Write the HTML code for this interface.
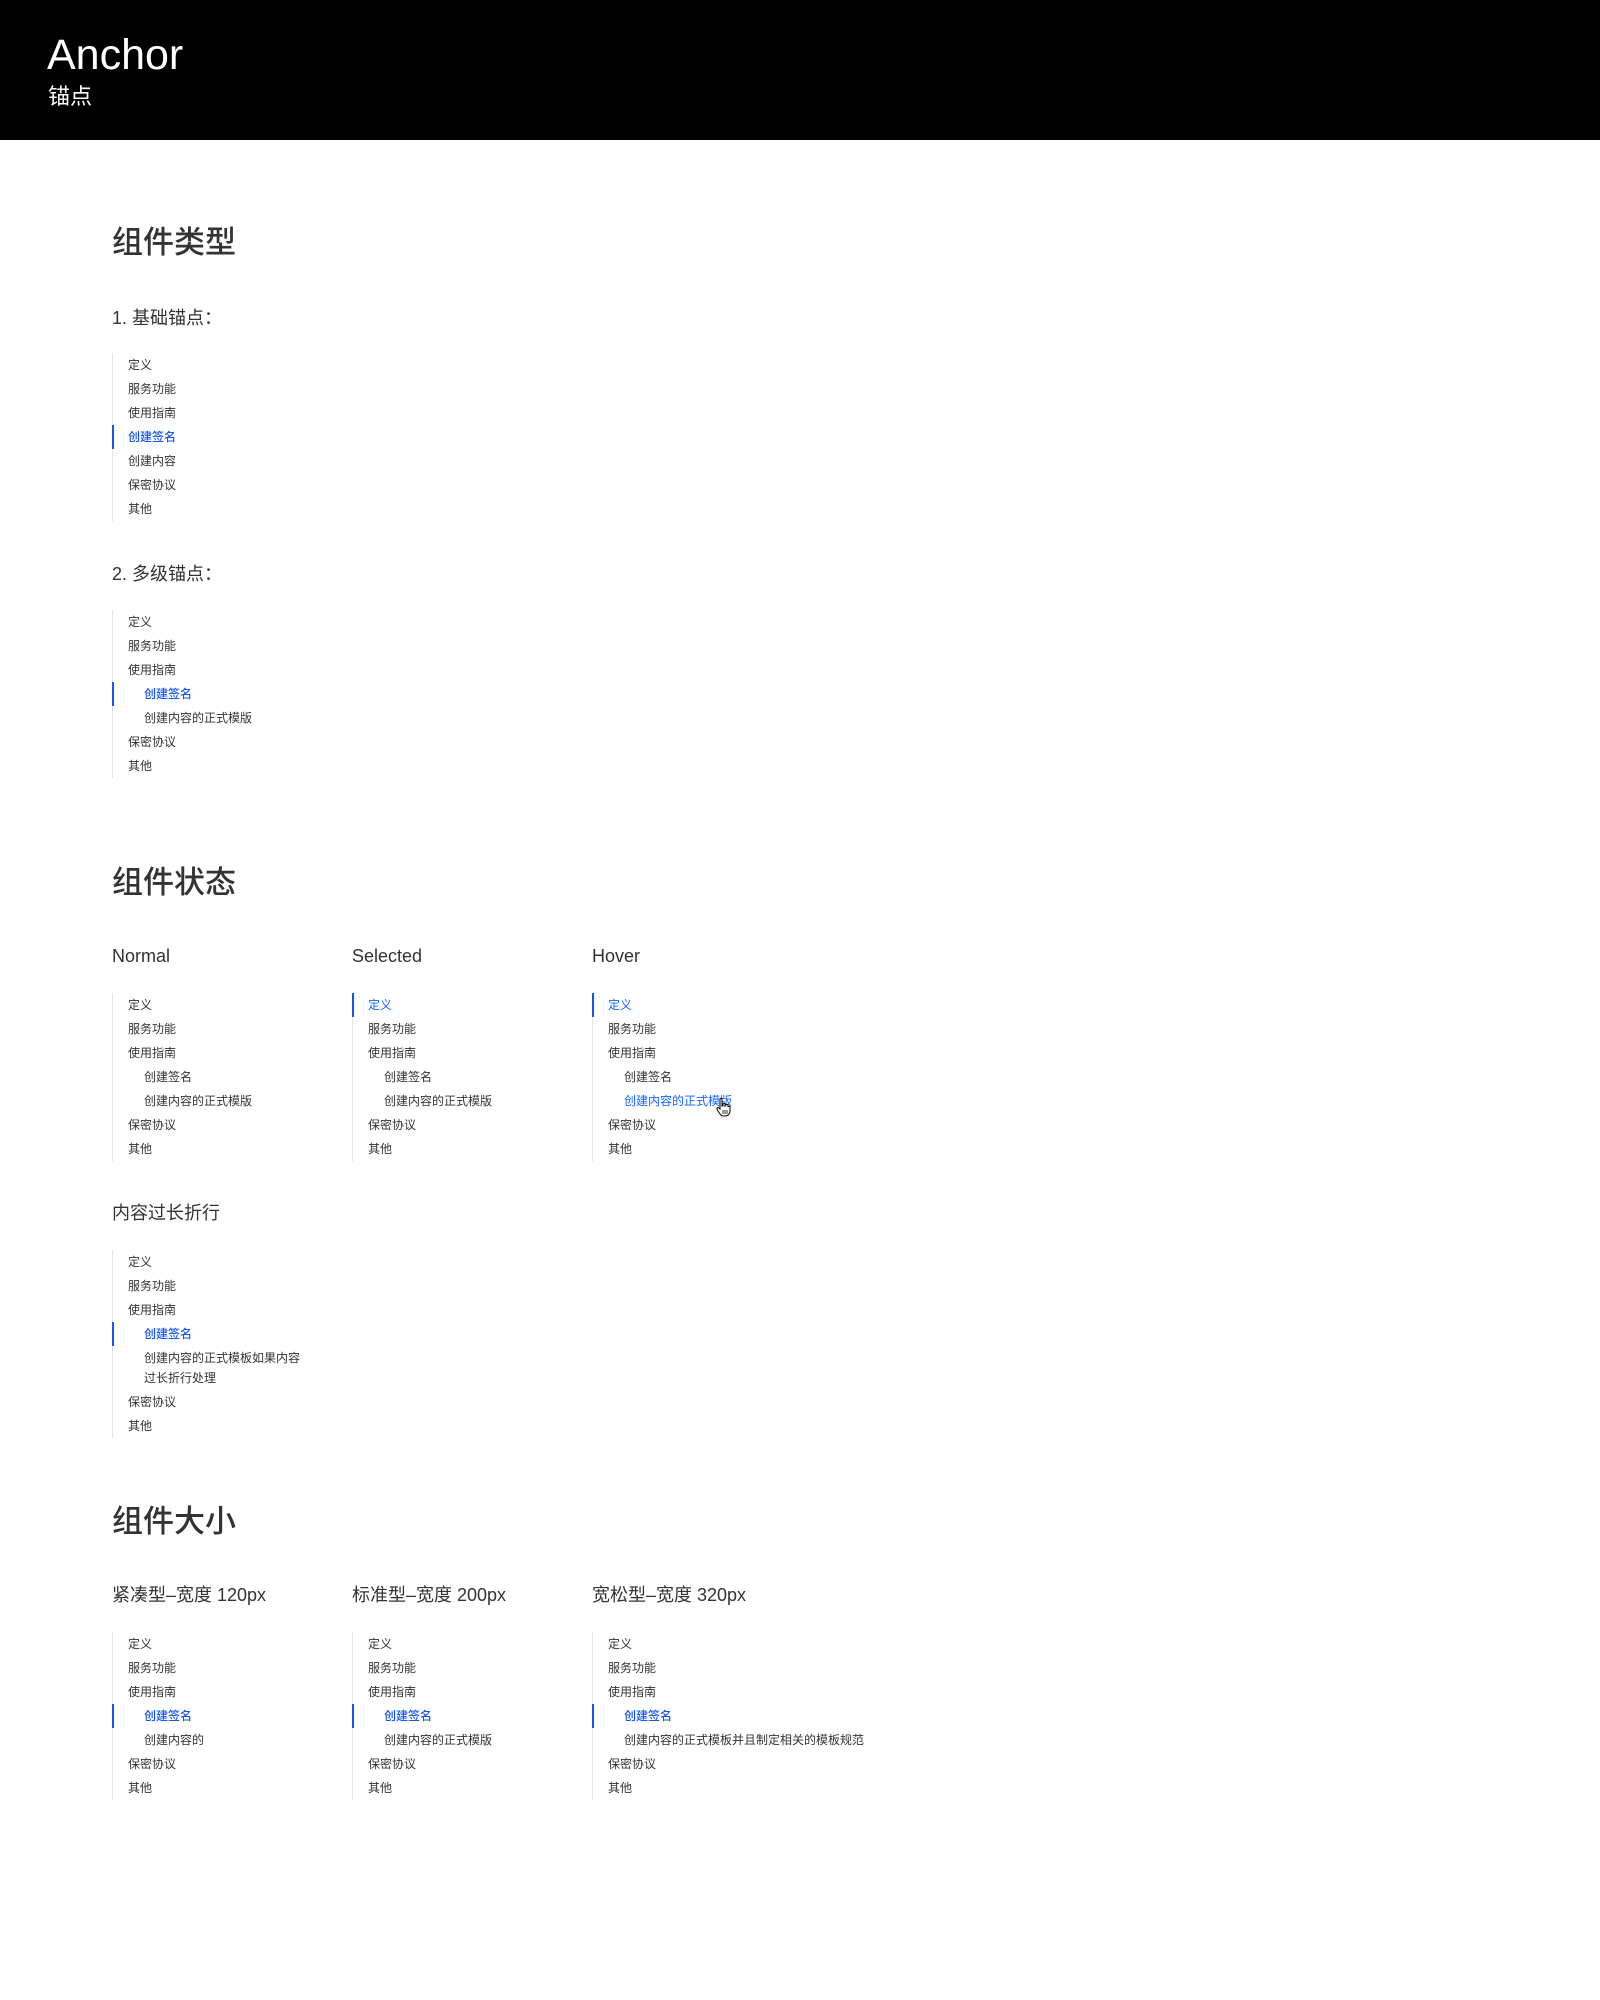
<!DOCTYPE html>
<html><head><meta charset="utf-8">
<style>
*{margin:0;padding:0;box-sizing:border-box}
body{width:1600px;height:2000px;background:#fff;position:relative;font-family:"Liberation Sans","Noto Sans CJK SC",sans-serif;color:#333;overflow:hidden}
.hdr{position:absolute;left:0;top:0;width:1600px;height:140px;background:#000}
.t1{position:absolute;left:47px;top:30px;font-size:43px;color:#fff;line-height:50px}
.t2{position:absolute;left:48px;top:83px;font-size:22px;color:#fff;line-height:28px}
.h2{position:absolute;left:112px;font-size:31px;line-height:40px;color:#333;font-weight:500}
.h3{position:absolute;font-size:18px;line-height:24px;color:#333}
.list{position:absolute;border-left:1px solid #e3e3e3;font-size:12px;color:#333}
.list div{position:relative;padding:2px 14px 2px 15px;line-height:20px;white-space:nowrap}
.list div.s{padding-left:31px}
.list div.a{color:#1456f0;font-weight:500}
.list div.b:before{content:"";position:absolute;left:-1px;top:0;bottom:0;width:2px;background:#1456f0}
.list div.h{color:#1664ff}
</style></head><body>
<div class="hdr"><div class="t1">Anchor</div><div class="t2">锚点</div></div>

<div class="h2" style="top:223px">组件类型</div>
<div class="h3" style="left:112px;top:306px">1. 基础锚点：</div>
<div class="list" style="left:112px;top:353px;width:200px">
<div>定义</div><div>服务功能</div><div>使用指南</div><div class="a b">创建签名</div><div>创建内容</div><div>保密协议</div><div>其他</div>
</div>

<div class="h3" style="left:112px;top:562px">2. 多级锚点：</div>
<div class="list" style="left:112px;top:610px;width:200px">
<div>定义</div><div>服务功能</div><div>使用指南</div><div class="s a b">创建签名</div><div class="s">创建内容的正式模版</div><div>保密协议</div><div>其他</div>
</div>

<div class="h2" style="top:863px">组件状态</div>
<div class="h3" style="left:112px;top:944px">Normal</div>
<div class="h3" style="left:352px;top:944px">Selected</div>
<div class="h3" style="left:592px;top:944px">Hover</div>
<div class="list" style="left:112px;top:993px;width:200px">
<div>定义</div><div>服务功能</div><div>使用指南</div><div class="s">创建签名</div><div class="s">创建内容的正式模版</div><div>保密协议</div><div>其他</div>
</div>
<div class="list" style="left:352px;top:993px;width:200px">
<div class="b" style="color:#1664ff">定义</div><div>服务功能</div><div>使用指南</div><div class="s">创建签名</div><div class="s">创建内容的正式模版</div><div>保密协议</div><div>其他</div>
</div>
<div class="list" style="left:592px;top:993px;width:200px">
<div class="b" style="color:#1664ff">定义</div><div>服务功能</div><div>使用指南</div><div class="s">创建签名</div><div class="s h">创建内容的正式模版</div><div>保密协议</div><div>其他</div>
</div>
<svg style="position:absolute;left:716px;top:1097px" width="16" height="20" viewBox="0 0 16 20"><path d="M4 2 C4 1 6 1 6 2 L6 9 L7 9 L7 7 C7 6 9 6 9 7 L9 9 L10 8 C10 7 12 7 12 8.5 L12 10 C12 9 14 9 14 10 L14 14 C14 17 12 19 9 19 L7 19 C5 19 4 17 2 14 L1 12 C0.5 11 2 10 3 11 L4 12 Z" fill="#fff" stroke="#000" stroke-width="1"/><path d="M7 13v4M9 13v4M11 13v4" stroke="#000" stroke-width="0.8"/></svg>

<div class="h3" style="left:112px;top:1201px">内容过长折行</div>
<div class="list" style="left:112px;top:1250px;width:200px">
<div>定义</div><div>服务功能</div><div>使用指南</div><div class="s a b">创建签名</div><div class="s">创建内容的正式模板如果内容<br>过长折行处理</div><div>保密协议</div><div>其他</div>
</div>

<div class="h2" style="top:1502px">组件大小</div>
<div class="h3" style="left:112px;top:1583px">紧凑型–宽度 120px</div>
<div class="h3" style="left:352px;top:1583px">标准型–宽度 200px</div>
<div class="h3" style="left:592px;top:1583px">宽松型–宽度 320px</div>
<div class="list" style="left:112px;top:1632px;width:200px">
<div>定义</div><div>服务功能</div><div>使用指南</div><div class="s a b">创建签名</div><div class="s">创建内容的</div><div>保密协议</div><div>其他</div>
</div>
<div class="list" style="left:352px;top:1632px;width:200px">
<div>定义</div><div>服务功能</div><div>使用指南</div><div class="s a b">创建签名</div><div class="s">创建内容的正式模版</div><div>保密协议</div><div>其他</div>
</div>
<div class="list" style="left:592px;top:1632px;width:320px">
<div>定义</div><div>服务功能</div><div>使用指南</div><div class="s a b">创建签名</div><div class="s">创建内容的正式模板并且制定相关的模板规范</div><div>保密协议</div><div>其他</div>
</div>
</body></html>
